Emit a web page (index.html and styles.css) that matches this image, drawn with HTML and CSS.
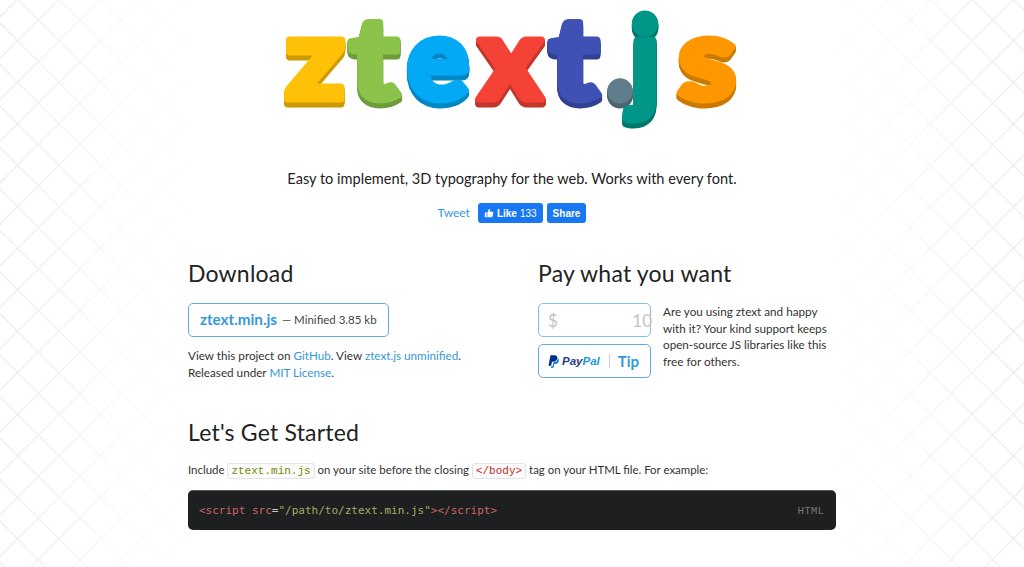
FILE: index.html
```html
<!DOCTYPE html>
<html lang="en">
<head>
<meta charset="utf-8">
<title>ztext.js</title>
<link rel="stylesheet" href="styles.css">
</head>
<body>
<header class="hero">
  <svg class="logo" viewBox="270 0 490 140" width="490" height="140" role="img" aria-label="ztext.js">
    <defs>
      <g id="word">
        <text class="l c-z" x="318" y="99" textLength="60" lengthAdjust="spacingAndGlyphs">z</text>
        <text class="l c-t1" x="377" y="99" textLength="49" lengthAdjust="spacingAndGlyphs">t</text>
        <text class="l c-e" x="441" y="99" textLength="62" lengthAdjust="spacingAndGlyphs">e</text>
        <text class="l c-x" x="513.500" y="99" textLength="63" lengthAdjust="spacingAndGlyphs">x</text>
        <text class="l c-t2" x="577" y="99" textLength="49" lengthAdjust="spacingAndGlyphs">t</text>
        <text class="l c-j" x="648" y="99">j</text>
        <text class="l c-dot" x="623" y="99">.</text>
        <text class="l c-s" x="710" y="99" textLength="58" lengthAdjust="spacingAndGlyphs">s</text>
      </g>
    </defs>
    <g class="depth">
      <use href="#word" y="5"/><use href="#word" y="4"/><use href="#word" y="3"/><use href="#word" y="2"/><use href="#word" y="1"/>
    </g>
    <use href="#word"/>
  </svg>
  <p class="tagline">Easy to implement, 3D typography for the web. Works with every font.</p>
  <div class="social">
    <a class="tweet" href="#">Tweet</a>
    <a class="fb" href="#">
      <svg class="thumb" viewBox="0 0 12 12" width="10" height="10"><path d="M1 5.500h2.200V11H1zM4 5.400 6 1.200c.9-.2 1.500.5 1.300 1.400L6.900 4.600h3.200c.8 0 1.200.7 1 1.300l-1 4.300c-.1.500-.5.800-1 .8H4z"/></svg>
      <b>Like</b> <span class="count">133</span>
    </a>
    <a class="fb" href="#"><b>Share</b></a>
  </div>
</header>

<main class="page">
  <div class="columns">
    <section>
      <h2>Download</h2>
      <a class="download" href="#"><strong>ztext.min.js</strong> <span>— Minified 3.85 kb</span></a>
      <p class="small">View this project on <a href="#">GitHub</a>. View <a href="#">ztext.js unminified</a>.<br>Released under <a href="#">MIT License</a>.</p>
    </section>
    <section>
      <h2>Pay what you want</h2>
      <div class="pay">
        <div class="pay-form">
          <div class="amount"><span class="dollar">$</span><span class="value">10</span></div>
          <a class="paypal" href="#">
            <svg class="pp" viewBox="0 0 14 16" width="11" height="13"><path class="pp-a" d="M3.200 0h5c2.600 0 4.100 1.400 3.700 3.800-.4 2.900-2.400 4.400-5 4.400H5L4 13.500H.6z"/><path class="pp-b" d="M12.500 4c1.200.8 1.500 2 1.200 3.500-.5 2.500-2.300 3.800-4.500 3.800H7.800L7 16H3.700l.4-2H6l1-5h1.200c2.400 0 4-1.700 4.300-5z"/></svg>
            <span class="pp-word"><i class="pp-pay">Pay</i><i class="pp-pal">Pal</i></span>
            <span class="pp-sep"></span>
            <span class="pp-tip">Tip</span>
          </a>
        </div>
        <p class="small pay-text">Are you using ztext and happy with it? Your kind support keeps open-source JS libraries like this free for others.</p>
      </div>
    </section>
  </div>

  <section class="start">
    <h2>Let's Get Started</h2>
    <p class="small include">Include <code class="ok">ztext.min.js</code> on your site before the closing <code class="tag">&lt;/body&gt;</code> tag on your HTML file. For example:</p>
    <pre class="code"><code><span class="t">&lt;script</span> <span class="t">src</span><span class="p">=</span><span class="s">"/path/to/ztext.min.js"</span><span class="t">&gt;&lt;/script&gt;</span></code><span class="lang">HTML</span></pre>
  </section>
</main>
</body>
</html>
```
FILE: styles.css
```css
* { box-sizing: border-box; }
html, body { margin: 0; height: 100%; }
body {
  font-family: "Lato", "Noto Sans", sans-serif;
  color: #222;
  overflow: hidden;
  background-color: #fff;
  background-image:
    linear-gradient(to right, rgba(255,255,255,.1) 0%, rgba(255,255,255,.8) 13%, #fff 20%, #fff 80%, rgba(255,255,255,.8) 87%, rgba(255,255,255,.1) 100%),
    linear-gradient(45deg, transparent calc(50% - 1px), #e6e6e6 50%, transparent calc(50% + 1px)),
    linear-gradient(-45deg, transparent calc(50% - 1px), #e6e6e6 50%, transparent calc(50% + 1px));
  background-size: 100% 100%, 41.5px 41.5px, 41.5px 41.5px;
  background-position: 0 0, 38.3px 20px, 38.3px 20px;
}
a { color: #3498db; text-decoration: none; }

.hero { display: flex; flex-direction: column; align-items: center; }
.logo { display: block; }
.l {
  font-family: "Lato", sans-serif;
  font-weight: 900;
  font-size: 114px;
  text-anchor: middle;
  fill: currentColor;
  stroke: currentColor;
  stroke-width: 7px;
  stroke-linejoin: round;
}
.depth { filter: brightness(.8); }
.c-z { color: #ffc107; }
.c-t1 { color: #8bc34a; }
.c-e { color: #03a9f4; }
.c-x { color: #f44336; }
.c-t2 { color: #3f51b5; }
.c-dot { color: #607d8b; }
.c-j { color: #009688; }
.c-s { color: #ff9800; }

.tagline { margin: 29px 0 0; font-size: 14.55px; line-height: 20px; color: #222; }
.social { display: flex; align-items: center; gap: 4px; margin-top: 14px; height: 20px; }
.tweet { font-size: 12px; margin: 0 4px 2px 0; }
.fb {
  display: flex; align-items: center; gap: 3px;
  height: 20px; padding: 0 6px;
  background: #1877f2; color: #fff;
  border-radius: 3px;
  font: 10px "Liberation Sans", sans-serif;
}
.fb b { font-weight: 700; }
.thumb { fill: #fff; }

.page { width: 648px; margin: 0 auto; }
.columns { display: grid; grid-template-columns: 350px 298px; margin-top: 33px; }
h2 { margin: 0; font-size: 23px; line-height: 34px; font-weight: 400; color: #222; letter-spacing: .2px; }
.download {
  display: flex; align-items: center; gap: 5px;
  width: 201px; height: 34px; margin-top: 13px; padding: 0 11px 2px;
  white-space: nowrap;
  background: #fff;
  border: 1px solid #5dade2; border-radius: 5px;
}
.download strong { font-size: 15.2px; font-weight: 700; }
.download span { font-size: 11.5px; color: #444; }
.small { margin: 0; font-size: 11.7px; line-height: 17px; color: #333; }
.download + .small { margin-top: 10px; }
.pay { display: flex; gap: 12px; margin-top: 13px; }
.pay-form { display: flex; flex-direction: column; gap: 7px; width: 113px; flex: none; }
.amount {
  display: flex; justify-content: space-between; align-items: center;
  height: 34px; padding: 0 0 0 9px;
  border: 1px solid #85c1e9; border-radius: 5px;
  background: #fff; color: #c4c4c4; font-size: 17px;
}
.value { margin-right: -2px; }
.paypal {
  display: flex; align-items: center;
  height: 34px; padding: 0 9px;
  border: 1px solid #5dade2; border-radius: 5px;
  background: #fff;
}
.pp { flex: none; }
.pp-a { fill: #003087; }
.pp-b { fill: #0070e0; }
.pp-word { font: italic 700 11.5px "Liberation Sans", sans-serif; margin-left: 3px; }
.pp-word i { font-style: italic; }
.pp-pay { color: #253b80; }
.pp-pal { color: #179bd7; }
.pp-sep { width: 1px; height: 14px; background: #ccc; margin: 0 8px 0 9px; }
.pp-tip { font-size: 15px; font-weight: 700; color: #3498db; }
.pay-text { width: 170px; margin-top: 0; line-height: 16.7px; }

.start { margin-top: 34px; }
.include { margin-top: 11px; line-height: 20px; font-size: 11.45px; }
.include code {
  font: 11px "Liberation Mono", monospace;
  padding: 1px 3px;
  background: #fbfbfb;
  border: 1px solid #e3e3e3;
  border-radius: 3px;
}
.ok { color: #718c00; }
.tag { color: #c82829; }
.code {
  display: flex; justify-content: space-between; align-items: center;
  height: 40px; margin: 10px 0 0; padding: 0 12px 0 11px;
  background: #1d1f21;
  border-top: 1px solid #555;
  border-radius: 5px;
  font: 11px "Liberation Mono", monospace;
}
.code .t { color: #cc6666; }
.code .p { color: #c5c8c6; }
.code .s { color: #a5ad62; }
.lang { color: #777; font-size: 11px; }
```
